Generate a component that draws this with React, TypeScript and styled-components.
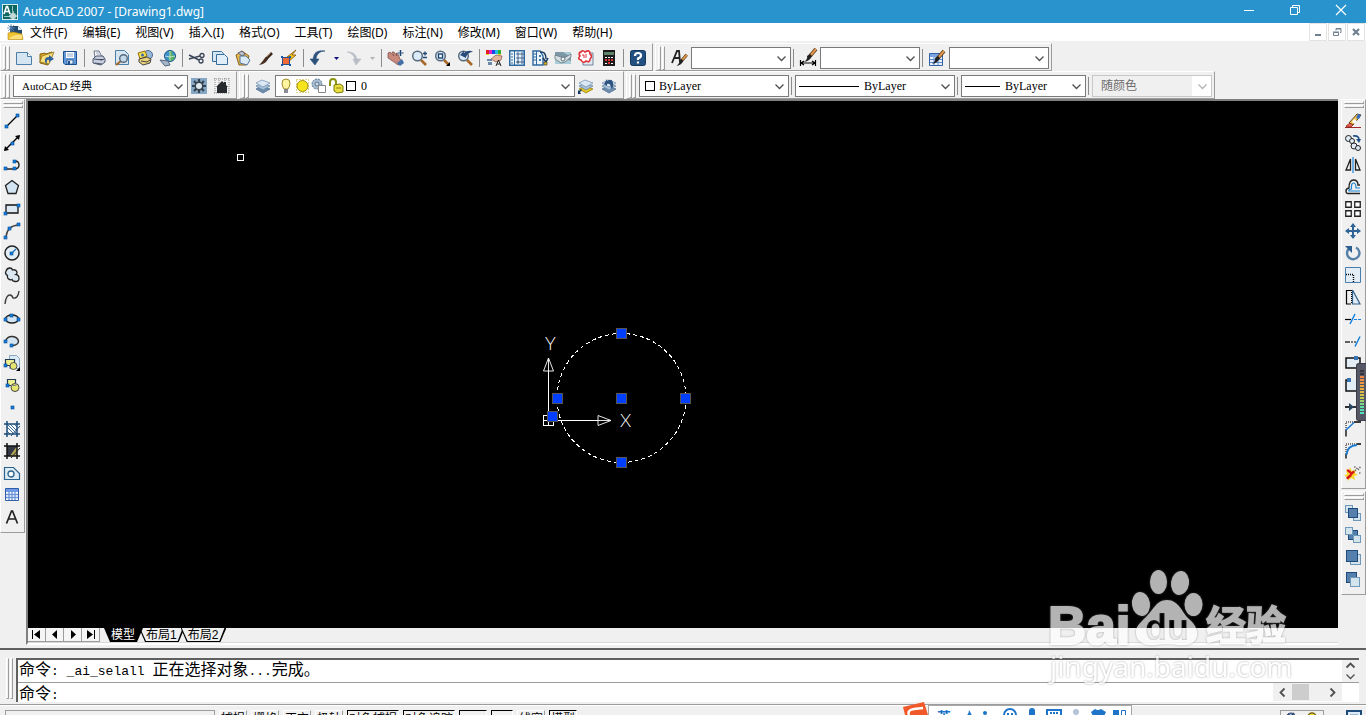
import React from "react";
import styled, { createGlobalStyle, css } from "styled-components";

const face = "#f0f0f0";
const shadow = "#9c9c9c";
const dark = "#606060";
const uiFont = '"Noto Sans", "Noto Sans CJK SC", sans-serif';
const songFont = '"Liberation Serif", "Noto Sans CJK SC", serif';

const GlobalStyle = createGlobalStyle`
  * { box-sizing: border-box; }
  body { margin: 0; background: ${face}; overflow: hidden; }
  button, input, select { font: inherit; color: inherit; margin: 0; }
`;

const Shell = styled.div`
  position: relative;
  display: flex;
  flex-direction: column;
  height: 100vh;
  overflow: hidden;
  background: ${face};
  color: #000;
  font-family: ${uiFont};
  font-size: 12px;
`;

const Glyph = styled.svg`
  display: block;
  flex: none;
  overflow: visible;
`;

/* ---------- title and menu ---------- */

const TitleBar = styled.header`
  display: flex;
  align-items: center;
  flex: none;
  height: 23px;
  padding: 0 2px;
  background: #2893cc;
  color: #fff;
`;

const Title = styled.h1`
  flex: 1;
  margin: 0 0 0 5px;
  font-size: 12px;
  font-weight: 400;
  line-height: 22px;
`;

const CaptionButton = styled.button`
  display: flex;
  align-items: center;
  align-self: flex-start;
  justify-content: center;
  width: 46px;
  height: 20px;
  padding: 0;
  border: 0;
  background: none;
`;

const MenuBar = styled.nav`
  display: flex;
  align-items: center;
  flex: none;
  height: 18px;
  padding: 0 1px 0 7px;
  background: #fff;
`;

const MenuList = styled.div`
  display: flex;
  flex: 1;
  gap: 15px;
  margin-left: 7px;
`;

const MenuItem = styled.button`
  padding: 2px 0 0;
  border: 0;
  background: none;
  line-height: 18px;
  white-space: nowrap;
`;

const ChildButton = styled.button`
  display: flex;
  align-items: center;
  justify-content: center;
  width: 18px;
  height: 18px;
  margin-left: 1px;
  padding: 0;
  border: 1px solid #e3e3e3;
  background: #fff;
`;

/* ---------- toolbars ---------- */

const ToolbarDock = styled.div`
  flex: none;
  padding-top: 2px;
`;

const ToolbarRow = styled.div`
  display: flex;
  gap: 2px;
`;

const edges = css`
  border: 1px solid;
  border-color: #fff ${shadow} ${shadow} #fff;
`;

const Bar = styled.div`
  ${edges}
  display: flex;
  align-items: center;
  flex: none;
  height: 28px;
  padding: 2px 2px 0;
`;

const Grip = styled.span<{ $vertical?: boolean; $tall?: boolean }>`
  flex: none;
  display: flex;
  flex-direction: ${(p) => (p.$vertical ? "column" : "row")};
  gap: 1px;
  ${(p) =>
    p.$vertical
      ? "width: 20px; height: 7px; margin: 1px 0 2px 2px;"
      : `width: 7px; height: ${p.$tall ? 41 : 24}px; margin-right: 3px;`}
  &::before, &::after {
    content: "";
    flex: 1;
    ${edges}
  }
`;

const ToolButton = styled.button<{ $narrow?: boolean }>`
  flex: none;
  display: flex;
  align-items: center;
  width: ${(p) => (p.$narrow ? 13 : 23)}px;
  height: 22px;
  padding: 0 0 0 ${(p) => (p.$narrow ? 4 : 3)}px;
  border: 0;
  background: none;
`;

const Separator = styled.span`
  flex: none;
  width: 1px;
  height: 18px;
  margin: 0 3px 0 2px;
  background: #8c8c8c;
`;

const Combo = styled.label<{ $width: number; $off?: boolean }>`
  flex: none;
  display: flex;
  align-items: center;
  gap: 3px;
  width: ${(p) => p.$width}px;
  height: 22px;
  padding: 0 4px 0 3px;
  border: 1px solid ${(p) => (p.$off ? "#c8c8c8" : "#7a7a7a")};
  background: ${(p) => (p.$off ? "linear-gradient(to left, #fff 19px, #f0f0f0 19px)" : "#fff")};
  color: ${(p) => (p.$off ? "#6d6d6d" : "#000")};
`;

const ComboSelect = styled.select<{ $small?: boolean; $indent?: number }>`
  appearance: none;
  flex: 1;
  min-width: 0;
  height: 18px;
  padding: 0 0 0 ${(p) => p.$indent ?? 0}px;
  border: 0;
  background: none;
  opacity: 1;
  font-family: ${songFont};
  font-size: ${(p) => (p.$small ? 11 : 12)}px;
`;

/* ---------- workspace ---------- */

const Workspace = styled.main`
  display: flex;
  flex: 1;
  min-height: 0;
`;

const SideDock = styled.aside<{ $end?: boolean }>`
  display: flex;
  flex-direction: column;
  align-items: ${(p) => (p.$end ? "flex-end" : "flex-start")};
  flex: none;
  gap: 2px;
  width: 26px;
`;

const SideBar = styled.div`
  ${edges}
  width: 25px;
  padding-bottom: 4px;
`;

const SideButton = styled.button`
  display: flex;
  align-items: center;
  width: 22px;
  height: 22px;
  padding: 0 0 0 3px;
  border: 0;
  background: none;
`;

const DrawingFrame = styled.section`
  display: flex;
  flex-direction: column;
  flex: 1;
  min-width: 0;
  margin: 0 2px 3px 0;
  border-left: 2px solid #808080;
  border-top: 2px solid #808080;
  border-bottom: 2px solid #fff;
`;

const Canvas = styled.div`
  flex: 1;
  min-height: 0;
  background: #000;
`;

const Drawing = styled.svg`
  display: block;
  width: 100%;
  height: 100%;
  font-family: Lato, "Liberation Sans", sans-serif;
  font-weight: 300;
`;

const SheetRow = styled.div`
  display: flex;
  flex: none;
  height: 15px;
  border-bottom: 1px solid #d9d9d9;
`;

const SheetNav = styled.button`
  display: flex;
  align-items: center;
  justify-content: center;
  width: 18px;
  height: 14px;
  padding: 0;
  border: 0;
  border-right: 1px solid ${shadow};
  border-bottom: 1px solid ${shadow};
  background: #f5f5f5;
`;

const SheetTab = styled.button<{ $active?: boolean }>`
  position: relative;
  height: 14px;
  margin-left: ${(p) => (p.$active ? 4 : -4)}px;
  padding: 0 8px 0 7px;
  border: 0;
  background: #000;
  clip-path: polygon(0 0, 100% 0, calc(100% - 6px) 100%, 6px 100%);
  color: ${(p) => (p.$active ? "#fff" : "#000")};
  font-family: "Liberation Sans", "Noto Sans CJK SC", sans-serif;
  line-height: 12px;
  z-index: ${(p) => (p.$active ? 1 : 0)};
  isolation: isolate;
  &::before {
    content: "";
    position: absolute;
    z-index: -1;
    inset: 0 0 1px;
    background: ${(p) => (p.$active ? "#000" : face)};
    clip-path: polygon(1px 0, calc(100% - 2px) 0, calc(100% - 7px) 100%, 7px 100%);
  }
`;

/* ---------- command window ---------- */

const CommandDock = styled.section`
  display: flex;
  flex: none;
  padding: 8px 7px 2px 6px;
  border-top: 2px solid ${dark};
  border-bottom: 1px solid ${shadow};
`;

const CommandBody = styled.div`
  flex: 1;
  min-width: 0;
  border-left: 2px solid ${dark};
  border-top: 2px solid ${dark};
  background: #fff;
  font-family: "Noto Sans CJK SC", sans-serif;
  font-size: 16px;
  line-height: 16px;
`;

const CommandLine = styled.div`
  display: flex;
  align-items: flex-start;
  height: 22px;
  padding-left: 1px;
  & + & {
    height: 20px;
    border-top: 1px solid ${shadow};
  }
`;

const History = styled.div`
  flex: 1;
  white-space: pre;
`;

const Prompt = styled.label`
  padding-top: 1px;
`;

const Code = styled.span`
  font-family: "Liberation Mono", monospace;
  font-size: 13px;
`;

const PromptInput = styled.input`
  flex: 1;
  min-width: 0;
  padding: 0;
  border: 0;
  outline: 0;
  background: none;
`;

const VerticalScroll = styled.div`
  display: flex;
  flex-direction: column;
  justify-content: space-around;
  align-items: center;
  width: 17px;
  height: 22px;
  background: ${face};
`;

const HorizontalScroll = styled.div`
  display: flex;
  align-items: stretch;
  width: 69px;
  height: 18px;
  margin-right: 17px;
  background: ${face};
`;

const ScrollButton = styled.button<{ $wide?: boolean }>`
  display: flex;
  align-items: center;
  justify-content: center;
  width: ${(p) => (p.$wide ? 19 : 17)}px;
  padding: 0;
  border: 0;
  background: none;
`;

const Thumb = styled.span`
  width: 17px;
  margin: 1px auto 1px 0;
  background: #cdcdcd;
`;

/* ---------- status bar ---------- */

const StatusBar = styled.footer`
  display: flex;
  align-items: flex-start;
  flex: none;
  gap: 4px;
  height: 10px;
  padding: 4px 4px 0 5px;
  border-top: 1px solid #fff;
  overflow: hidden;
  font-family: "Liberation Sans", "Noto Sans CJK SC", sans-serif;
`;

const Coordinates = styled.output`
  flex: none;
  width: 210px;
  height: 18px;
  border: 1px solid ${shadow};
`;

const Toggle = styled.button<{ $on?: boolean; $wide?: boolean; $slim?: boolean }>`
  flex: none;
  width: ${(p) => (p.$wide ? 52 : p.$slim ? 22 : 28)}px;
  height: 18px;
  padding: 0;
  border: 1px solid;
  border-color: ${(p) => (p.$on ? "#000 #fff #fff #000" : `#fff ${shadow} ${shadow} #fff`)};
  background: ${face};
  line-height: 15px;
  white-space: nowrap;
  overflow: hidden;
`;

const Tray = styled.div`
  display: flex;
  flex: none;
  gap: 10px;
  width: 44px;
  height: 18px;
  margin-left: auto;
  padding: 1px 4px;
  border: 1px solid ${shadow};
`;

const TrayButton = styled.button`
  flex: none;
  margin-left: 18px;
  padding: 0;
  border: 0;
  background: none;
`;

/* ---------- floating layers ---------- */

const Ime = styled.div`
  position: absolute;
  left: 903px;
  bottom: 0;
  display: flex;
  align-items: flex-end;
  height: 13px;
  overflow: hidden;
`;

const ImePanel = styled.div`
  display: flex;
  gap: 10px;
  width: 204px;
  height: 10px;
  padding: 3px 5px 0 8px;
  border: 1px solid #a8a8a8;
  border-bottom: 0;
  background: #fff;
  color: #1d74c8;
  font-weight: 700;
  font-size: 14px;
  line-height: 16px;
`;

const Watermark = styled.svg`
  position: absolute;
  right: 66px;
  bottom: 25px;
  opacity: 0.7;
  pointer-events: none;
  filter: drop-shadow(0 0 1px rgba(110, 110, 110, 0.8));
`;

const Meter = styled.div`
  position: absolute;
  right: 0;
  top: 363px;
  width: 10px;
  height: 58px;
  padding: 6px 2px 6px 3px;
  border: 1px solid #3c3d48;
  border-right: 0;
  border-radius: 3px 0 0 3px;
  background: #565765;
`;

const MeterScale = styled.div`
  height: 100%;
  background:
    repeating-linear-gradient(to bottom, transparent 0 2px, #565765 2px 3px),
    linear-gradient(to bottom, #34353c 0 12%, #f08048 12%, #e8a840 40%, #cfc848 60%, #58e0a8 85%, #50e0c0);
`;

/* ---------- icon drawings (16 x 16) ---------- */

const navy = "#1c4b7c";
const pale = "#d3e4f2";
const Dot = ({ x, y }: { x: number; y: number }) => (
  <rect x={x} y={y} width="3" height="3" fill="#1080e0" stroke="#0a4c90" strokeWidth=".6" />
);
const Layers = ({ gold }: { gold?: boolean }) => (
  <g strokeWidth=".7">
    <path d="M1 11l6-3 8 3-7 4z" fill={gold ? "#e6c820" : "#6f8fb0"} stroke={gold ? "#8a7200" : "#45658a"} />
    <path d="M1 8l6-3 8 3-7 4z" fill="#a9c2da" stroke="#5c7c9e" />
    <path d="M1 5l6-3 8 3-7 4z" fill="#dce9f4" stroke="#6d8cad" />
  </g>
);
const Lens = () => (
  <>
    <path d="M10 10l5 5" stroke="#a86828" strokeWidth="2.6" />
    <circle cx="6.5" cy="6" r="4.8" fill="#dcebf8" stroke="#596a7c" strokeWidth="1.5" />
  </>
);
const Brush = () => (
  <>
    <path d="M15 1L9 8" stroke="#603818" strokeWidth="3.6" />
    <path d="M15 1L9 8" stroke="#e09a50" strokeWidth="2" />
    <path d="M9 6l2 2q-2 5-8 6 4-3 3-6z" fill="#202020" />
  </>
);
const Squares = ({ kind }: { kind: number }) => {
  const lite = (x: number, y: number, s = 7) => (
    <rect x={x} y={y} width={s} height={s} fill="#d4e4ec" stroke="#7098b8" />
  );
  const deep = (x: number, y: number, s = 9) => (
    <rect x={x} y={y} width={s} height={s} fill="#5580ae" stroke="#1c4b7c" />
  );
  if (kind === 0) return <>{lite(0.5, 0.5)}{lite(8.5, 8.5)}{deep(3.5, 3.5)}</>;
  if (kind === 1) return <>{deep(3.5, 3.5)}{lite(0.5, 0.5)}{lite(8.5, 8.5)}</>;
  if (kind === 2) return <>{lite(5.5, 5.5, 10)}{deep(1.5, 1.5, 11)}</>;
  return <>{deep(1.5, 1.5, 10)}{lite(5.5, 6.5, 9)}</>;
};

const art: Record<string, React.ReactNode> = {
  app: <><rect x=".5" y=".5" width="15" height="15" fill="#0d6662" stroke="#d8ecec" /><path d="M2 10L4.500 2.500h1L8 10M3 7.500h4" stroke="#fff" strokeWidth="1.600" fill="none" /><path d="M10.500 2v5M2 12.500h6" stroke="#9cc8c6" /><rect x="9" y="10" width="4" height="4" fill="none" stroke="#fff" /><path d="M11 7v9M7 12h9" stroke="#fff" /></>,
  doc: <><path d="M3 2h8l4 4v5L3 13z" fill="#23496f" /><path d="M11 2v4h4z" fill="#dfe9f2" /><path d="M0 4h8M4 0v8M1 1l6 6M7 1L1 7" stroke="#5f8cb8" strokeWidth=".8" /><path d="M1 9l5-1 9 2 1 5.500H1z" fill="#f0c430" stroke="#b98a10" strokeWidth=".6" /><path d="M2 15q4-5 13-4v4z" fill="#fbe07c" /></>,
  new: <><path d="M.5 2.500h11l4 4v8H.5z" fill="#d5e6f2" stroke="#4c7ea8" /><path d="M11.500 2.500v4h4" fill="#fff" stroke="#4c7ea8" /></>,
  open: <><path d="M1 4l5-1 1 1 6-2 1 2-5 11-8-2z" fill="#d8a420" stroke="#856410" /><path d="M3 6l12-4-5 12-9-2z" fill="#f7e07a" stroke="#8a6a18" strokeWidth=".7" /><path d="M6 12Q5 7 10 7V5l5 4-5 3v-2q-3-1-2 4z" fill="#315f9a" /></>,
  save: <><path d="M1.500 1.500h13v13H3l-1.500-1.500z" fill="#5f97d8" stroke="#1d4e8e" /><path d="M4 2h8v6H4z" fill="#fff" /><path d="M5 4h6M5 6h6" stroke="#88a8cc" /><path d="M5 10h6v4H5z" fill="#e7eef6" stroke="#1d4e8e" strokeWidth=".7" /><path d="M6 11h2v3H6z" fill="#1d4e8e" /></>,
  print: <><path d="M4 7L3 1h5l3 6z" fill="#fff" stroke="#687488" /><path d="M2 9l3-3h7l2 3v3l-4 3-8-2z" fill="#c9d0de" stroke="#4b566c" /><path d="M3 9l8 1 2-1M4 13l7 1" stroke="#4b566c" /><path d="M5 3h3M6 5h3" stroke="#98a4b8" /></>,
  preview: <><path d="M1.500.5h9l4 4v10h-13z" fill="#d5e6f2" stroke="#4c7ea8" /><path d="M7 11l-5 4" stroke="#a86828" strokeWidth="2" /><circle cx="9.500" cy="8.500" r="3.800" fill="#c4d9ea" stroke="#58687c" strokeWidth="1.400" /></>,
  publish: <><circle cx="11" cy="5" r="4.500" fill="#98b8da" stroke="#486a90" /><path d="M1 3l7-2 2 5-7 3z" fill="#f4dc50" stroke="#907010" /><path d="M2 9l8-2 4 2-1 4-7 2-4-3z" fill="#e9d27c" stroke="#444" /><path d="M4 11l6 1 3-2" stroke="#444" fill="none" /><circle cx="5.500" cy="5" r="1.500" fill="#3a6cb0" /></>,
  web: <><circle cx="10" cy="6" r="5.500" fill="#3d94cc" stroke="#1e5484" /><path d="M8 1q3 2 1 5t2 5q4-1 4-5-3 0-3-5z" fill="#54b060" /><path d="M5 6q5 2 10 0M10 1v10" stroke="#fff" strokeWidth=".6" fill="none" /><path d="M0 10l8 1 2 4-5 1z" fill="#a5b6cc" stroke="#54667e" /></>,
  cut: <g fill="none" stroke="#3c4658"><path d="M0 5l10 5M0 9l11-3" strokeWidth="1.600" /><circle cx="13" cy="5.500" r="2" strokeWidth="1.300" /><circle cx="12" cy="11" r="2" strokeWidth="1.300" /></g>,
  copy: <><path d="M.5 1.500h9l2 2v8H.5z" fill="#d5e6f2" stroke="#3a6c9c" /><path d="M4.500 4.500h8l3 3v7h-11z" fill="#dfeef8" stroke="#3a6c9c" /></>,
  paste: <><path d="M1 5l6-4 7 5-3 9H4z" fill="#e6b94a" stroke="#8a6420" /><path d="M3 3l4-2 3 3-3 2z" fill="#b8c0cc" stroke="#667" /><path d="M5 6h6l4 4-3 5-7-2z" fill="#dceaf5" stroke="#53749a" /></>,
  match: <><path d="M14 3L8 9" stroke="#302018" strokeWidth="2.600" /><path d="M13 3L9 7" stroke="#9a6038" strokeWidth="1" /><path d="M8 7l2 2q-2 5-9 6 4-4 5-6z" fill="#4a3024" /></>,
  block: <><path d="M15 0L6 7h4l-4 6 9-8h-4z" fill="#f8c820" stroke="#805000" strokeWidth=".8" /><rect x="1.500" y="7.500" width="7" height="7" fill="#f06a38" stroke="#2a508a" /><path d="M0 6h2v2H0zM8 6h2v2H8zM0 14h2v2H0zM8 14h2v2H8z" fill="#1a58b0" /></>,
  undo: <path d="M15 1Q7 1 6 9h3l-4 6-5-6h3Q4-1 15 1z" fill="#2c527c" stroke="#2c527c" strokeWidth=".6" />,
  redo: <path d="M1 2q8-1 10 7h4l-5 6-3-6h2Q7 3 1 2z" fill="#b8bec4" stroke="#b8bec4" strokeWidth=".6" />,
  pan: <><path d="M0 3l2-1 4 4-2-4 2 0 3 4-1-3 2 1 2 5 2 3-4 3-4-3-6-4z" fill="#c8897c" stroke="#7a4a44" strokeWidth=".7" /><path d="M9 13l5-4 2 4-4 3z" fill="#4470a8" /><path d="M12.500 0v6M9.500 3h6M11.500 1h2M11.500 5h2" stroke="#1e4676" /></>,
  zoom: <><Lens /><path d="M12 3.500h4M14 1.500v4M12 7.500h4" stroke="#1e4676" strokeWidth="1.300" /></>,
  zoomWin: <><Lens /><rect x="4.500" y="4" width="4" height="4" fill="#fff" stroke="#1e4676" strokeWidth="1.400" /><path d="M16 12v4h-4z" /></>,
  zoomPrev: <><Lens /><path d="M3 5l4-4v2q5-4 9-1-5 0-7 5v1z" fill="#284c7a" /></>,
  props: <><path d="M0 0h3v4H0z" fill="#e02020" /><path d="M3 0h3v4H3z" fill="#e020c0" /><path d="M6 0h3v4H6z" fill="#2040f0" /><path d="M9 0h3v4H9z" fill="#20c0e0" /><path d="M12 0h3v4h-3z" fill="#30b030" /><path d="M0 4h3v1H0zM12 4h3v1h-3z" fill="#f0d020" /><path d="M5 9l5-4 6 1-1 4-5 2z" fill="#e8b49a" stroke="#7c5444" strokeWidth=".7" /><path d="M1 9h5v2H1zM2 12h4v3H2z" fill="#6c88a8" /><path d="M10 16l2.500-6 2.500 6M11 14h3" stroke="#222" fill="none" /></>,
  center: <><rect x=".75" y=".75" width="14.500" height="14.500" fill="#edf5fb" stroke="#2d68a0" strokeWidth="1.500" /><path d="M5.500 1v14" stroke="#2d68a0" /><path d="M2 4h2M2 7h2M2 10h2M2 13h2" stroke="#2d68a0" /><path d="M8 3h2v2H8zM12 3h2v2h-2zM8 7h2v2H8zM12 7h2v2h-2zM12 11h2v2h-2z" fill="#fff" stroke="#2d568a" strokeWidth=".9" /><path d="M8 11h2v2H8z" fill="#f0c020" stroke="#2d568a" /></>,
  palette: <><path d="M1 1h7l3 5v9H1z" fill="#edf5fb" stroke="#2d68a0" strokeWidth="1.400" /><path d="M4.500 1v14M1 4h3M1 7h3M1 10h3" stroke="#2d68a0" /><path d="M7 5h2v2H7zM7 9h2v2H7z" fill="#3d78b0" /><path d="M8 2q6-1 6 7M11 8l3 4 2-4" fill="none" stroke="#183860" strokeWidth="1.500" /><path d="M12 12h3v3h-3z" fill="#e8c020" stroke="#333" strokeWidth=".7" /></>,
  sheet: <><path d="M0 2h16v12H0z" fill="#a9ccd8" /><path d="M0 2h8l8 5v4L0 5z" fill="#7d99a6" /><path d="M0 5l9 3 7-4v3l-6 5-4 1-6-4z" fill="#d5dfe2" stroke="#65757c" strokeWidth=".8" /><circle cx="8" cy="9" r="2" fill="#eef4f5" stroke="#65757c" /></>,
  markup: <><path d="M5 3h10v12H5z" fill="#dfe7ee" stroke="#70849c" /><path d="M2.500 3Q4-1 7 2q5-3 5 2 3 2 0 5 0 4-4 2-3 3-5-1-4-1-1-4-2-3 .5-4z" fill="#fff" stroke="#e03038" strokeWidth="1.600" /><path d="M4 5h2v3M8 4v4" stroke="#e03038" fill="none" /></>,
  calc: <><path d="M2 0h12v16H2z" fill="#1b1b1b" /><path d="M3 2h10v3H3z" fill="#5d8468" /><path d="M4 7h2v1H4zM7 7h2v1H7zM10 7h2v1h-2z" fill="#fff" /><path d="M4 9h2v2H4zM7 9h2v2H7zM10 9h2v2h-2zM7 12h2v2H7z" fill="#e03030" /><path d="M4 13h2v1H4zM10 13h2v1h-2z" fill="#fff" /></>,
  help: <><rect x=".5" y=".5" width="15" height="15" rx="2" fill="#235080" stroke="#14375c" /><path d="M5 6q0-3 3-3t3 2.500q0 2-3 3v1.500M8 11.500v2" fill="none" stroke="#fff" strokeWidth="2.200" /></>,
  textStyle: <><path d="M1 13L6 1h2l1 11M3 8h6" fill="none" stroke="#222" strokeWidth="1.800" /><g transform="translate(3 4) scale(.85)"><Brush /></g></>,
  dimStyle: <><g transform="translate(1 -2)"><Brush /></g><path d="M.5 10v6M15.500 10v6M1 13h14M4 11l-3 2 3 2M12 11l3 2-3 2" fill="none" stroke="#000" strokeWidth="1.200" /></>,
  tableStyle: <><path d="M.5 3.500h13v12H.5z" fill="#e7f0fc" stroke="#3460a8" /><path d="M1 4h12v3H1z" fill="#7aa4e0" /><path d="M1 9.500h12M1 12.500h12M5 7v8M9 7v8" stroke="#5c88cc" /><Brush /></>,
  gear: <><path d="M0 0h16v16H0z" fill="#86a8c6" /><path d="M8 1v14M1 8h14M3 3l10 10M13 3L3 13" stroke="#36434f" strokeWidth="2.200" /><circle cx="8" cy="8" r="4.500" fill="#36434f" /><circle cx="8" cy="8" r="3" fill="#dfe8ef" /></>,
  home: <><path d="M1 0v16M5 0v16M11 0v16M15 0v16M0 1h16M0 15h16" stroke="#8a8a8a" strokeDasharray="1 1" /><path d="M2 9l6-6 2 2V4h2v3l2 2h-1v6H3V9z" fill="#26292e" /></>,
  layers: <Layers />,
  layerPick: <><Layers gold /><path d="M0 16v-4l1 1 2-2 1 1-2 2 1 2z" fill="#18365c" /></>,
  layerPrev: <><Layers /><path d="M3 6l3-5v2q7-4 6 6l-2 2q0-6-4-5v2z" fill="#2d537f" /></>,
  line: <><path d="M2 14L14 2" stroke="#000" strokeWidth="1.300" /><Dot x={1} y={12} /><Dot x={12} y={1} /></>,
  xline: <><path d="M1 15L15 1" stroke="#000" strokeWidth="1.400" /><path d="M0 16l1-5 4 4zM16 0l-5 1 4 4z" /><Dot x={7} y={7} /></>,
  pline: <><path d="M2 12h8M10 12q5 0 5-4t-4-4" fill="none" stroke="#222" strokeWidth="1.400" /><Dot x={0} y={10} /><Dot x={9} y={10} /><Dot x={9} y={3} /></>,
  polygon: <path d="M8 1.500l6.500 5-2.500 8H4L1.500 6.500z" fill={pale} stroke="#222" strokeWidth="1.300" />,
  rect: <><path d="M2 4h12v8H2z" fill="#dce8f2" stroke="#111" strokeWidth="1.300" /><Dot x={0} y={11} /><Dot x={13} y={3} /></>,
  arc: <><path d="M2 14Q3 3 14 2" fill="none" stroke="#444" strokeWidth="1.400" /><Dot x={0} y={13} /><Dot x={4} y={4} /><Dot x={13} y={0} /></>,
  circle: <><circle cx="8" cy="8" r="7" fill="#e2edf6" stroke="#222" strokeWidth="1.500" /><path d="M8 8l4-4" stroke="#1870c0" strokeWidth="1.300" /><Dot x={6} y={7} /></>,
  cloud: <path d="M2 4q1-3 4-3 2 0 2.500 2Q12 2 13 5q0 2-1 2.500 3 .5 3 4 0 3-3.500 3-3 0-3.500-2-2 1-4-1-1-1-.5-3-3-2-1.500-4.500z" fill="#dbe8f1" stroke="#222" strokeWidth="1.300" />,
  spline: <path d="M1 15q1-9 5-9 2 0 3 3 5 1 6-7" fill="none" stroke="#3c3c3c" strokeWidth="1.400" />,
  ellipse: <><ellipse cx="8" cy="8" rx="6.500" ry="4" fill={pale} stroke="#222" strokeWidth="1.400" /><Dot x={0} y={7} /><Dot x={13} y={7} /><Dot x={6} y={3} /></>,
  ellipseArc: <><path d="M1.500 8q2-5 7-4.500t6 4.500q0 4-6 4.500z" fill={pale} /><path d="M1.500 8q2-5 7-4.500t6 4.500q0 4-6 4.500" fill="none" stroke="#333" strokeWidth="1.400" /><Dot x={0} y={7} /><Dot x={6} y={11} /></>,
  insert: <><path d="M5.500.5h7l3 3v10h-10z" fill="#dceaf5" stroke="#88a8c4" /><path d="M1.500 4.500h9v6h-9z" fill="#eff090" stroke="#243a50" strokeWidth="1.200" /><circle cx="9.500" cy="11" r="3.500" fill="#e7e470" stroke="#555" /><Dot x={0} y={9} /><path d="M16 12v4h-4z" /></>,
  makeBlock: <><path d="M3.500 2.500h8v6h-8z" fill="#eff090" stroke="#243a50" strokeWidth="1.200" /><circle cx="11" cy="10.500" r="4" fill="#e7e470" stroke="#444" /><path d="M7 8.500h5V6" stroke="#888" fill="none" /><Dot x={2} y={7} /></>,
  point: <Dot x={7} y={7} />,
  hatch: <><path d="M3 3h10v10H3z" fill="#fff" /><path d="M3 10l3 3M3 6l7 7M3 3l10 10M6 3l7 7M10 3l3 3" stroke="#2d6090" strokeWidth=".9" /><path d="M3 0v16M13 0v16M0 3h16M0 13h16" stroke={navy} strokeWidth="1.500" /><path d="M7 15L16 5" stroke={navy} /></>,
  gradient: <><path d="M3 3h10v10H3z" fill="#333844" /><path d="M13 3v10H6z" fill="#b1a658" /><path d="M3 0v16M13 0v16M0 3h16M0 13h16" stroke="#111" strokeWidth="1.500" /><path d="M7 15L16 5" stroke="#222" /></>,
  region: <><path d="M.5 2.500h9l6 6v6H.5z" fill="#ddebf4" stroke="#2b638f" strokeWidth="1.200" /><circle cx="7" cy="9" r="3" fill="#fff" stroke="#2b638f" strokeWidth="1.300" /></>,
  table: <><path d="M1.500 1.500h13v12h-13z" fill="#fff" stroke="#315da8" /><path d="M2 2h12v3H2z" fill="#6c98e4" /><path d="M2 7.500h12M2 10.500h12M5 5v8M8 5v8M11 5v8" stroke="#6c94d8" strokeWidth="1.300" /></>,
  mtext: <path d="M2.500 14.500L7.500 2h1l5 12.500M4.500 10h7" fill="none" stroke="#222" strokeWidth="1.700" />,
  erase: <><path d="M0 14.500h16" stroke="#a02828" /><path d="M12 1l4 1-8 10-4-2z" fill="#f4c858" stroke="#5c4310" strokeWidth="1" /><path d="M13 1l3 1-2 4-3-1z" fill="#356cc0" /><path d="M9 6l3 2-2 3-3-2z" fill="#fff" /><path d="M5 10l3 2-2 2-4 0-1-1z" fill="#e46050" stroke="#7c2018" strokeWidth=".7" /></>,
  copyObj: <><circle cx="3.500" cy="3.500" r="3" fill="#dfeaf4" stroke="#222" /><circle cx="7" cy="6" r="2.500" fill="#dfeaf4" stroke="#222" /><circle cx="9" cy="11" r="3" fill="#dfeaf4" stroke="#222" /><circle cx="13" cy="13" r="2.500" fill="#dfeaf4" stroke="#222" /><path d="M8 1q6-1 6 4" fill="none" stroke="#1d4e85" strokeWidth="1.700" /><path d="M11 4h5l-2 4z" fill="#1d4e85" /></>,
  mirror: <><path d="M5.500 2v11H1zM10.500 2v11H15z" fill="#eef5fa" stroke="#222" strokeWidth="1.300" /><path d="M8 0v16" stroke="#1884e0" strokeWidth="1.200" /></>,
  offset: <><path d="M15 14.500H3q-2 0-2-2.500t3-3Q4 1 8.500 1T13 6h2" fill="none" stroke="#222" strokeWidth="1.400" /><path d="M15 12H4q-1-1.500 2.500-2Q6 4 8.500 4T11 9h4" fill="none" stroke="#1884d0" strokeWidth="1.200" /></>,
  array: <path d="M.75 .75h5.500v5.500H.75zM9.750 .75h5.500v5.500h-5.500zM.75 9.750h5.500v5.500H.75zM9.750 9.750h5.500v5.500h-5.500z" fill="#fff" stroke="#222" strokeWidth="1.300" />,
  move: <><path d="M8 2v12M2 8h12" stroke="#2d6396" strokeWidth="2" /><path d="M8 0l3 4H5zM8 16l3-4H5zM0 8l4-3v6zM16 8l-4-3v6z" fill="#2d6396" /></>,
  rotate: <><path d="M11 2.500a6.200 6.200 0 1 1-7 1" fill="none" stroke="#5580a8" strokeWidth="2.400" /><path d="M0 1h7v7z" fill="#2d5f90" /></>,
  scale: <><path d="M.5 .5h15v15H.5z" fill="#e2edf5" stroke="#4a7eac" /><path d="M1 7.500h7.500V15" fill="none" stroke="#000" strokeWidth="1.400" strokeDasharray="1 1" /></>,
  stretch: <><path d="M7.500 1v14H15z" fill="#deebf4" stroke="#315f88" strokeWidth="1.200" /><path d="M1 1.500h5M1 15h5M1.500 1v14" stroke="#000" strokeWidth="1.200" /><path d="M6.500 1v14" stroke="#000" strokeDasharray="1 1" /></>,
  trim: <><path d="M0 8.500h6" stroke="#000" strokeWidth="1.200" /><path d="M9 8.500h7" stroke="#1884e0" strokeWidth="1.200" strokeDasharray="3 1" /><path d="M5 13l5-10" stroke="#1884e0" strokeWidth="1.500" /></>,
  extend: <><path d="M0 9h5" stroke="#000" strokeWidth="1.200" /><path d="M6 9h5" stroke="#000" strokeWidth="1.200" strokeDasharray="2 1" /><path d="M10 13.500l5-10" stroke="#1884e0" strokeWidth="1.500" /></>,
  breakAt: <><path d="M1 3h14v10H1z" fill="#e3edf5" stroke="#111" strokeWidth="1.500" /><path d="M9 1h4v4H9z" fill="#3874b4" /></>,
  breakObj: <><path d="M5 3H1v11h14V3h-3" fill="#e3edf5" stroke="#111" strokeWidth="1.500" /><path d="M2 1h4v4H2z" fill="#3874b4" /></>,
  join: <><path d="M0 8h16" stroke="#000" strokeWidth="1.600" /><path d="M4 4l5 4-5 4zM15 4l-5 4 5 4z" fill="#27435e" /></>,
  chamfer: <><path d="M1 15.500V9M9 1h7" stroke="#000" strokeWidth="1.300" /><path d="M1 9V1h8" stroke="#000" fill="none" strokeDasharray="1 1" /><path d="M1 9L9 1.500" stroke="#1878d0" strokeWidth="1.500" /></>,
  fillet: <><path d="M1 15.500V11M12 1h4" stroke="#000" strokeWidth="1.300" /><path d="M1 11V1h11" stroke="#000" fill="none" strokeDasharray="1 1" /><path d="M1.500 12Q2 2.500 12 2" fill="none" stroke="#1878d0" strokeWidth="1.800" /></>,
  explode: <><path d="M1 4l3 2 1-4 2 4 4-2-1 4 3 2-4 1 1 4-4-2-3 3V12l-4-1 3-2z" fill="#f8d830" /><path d="M2.500 13l3-2.500M6 9l2.500-2M3 5.500l2 1.500" stroke="#d81818" strokeWidth="2.400" strokeLinecap="round" /><path d="M10 6l3-4M13 5l3-4M9 2h2M14 8h2" stroke="#777" strokeDasharray="1.500 1" strokeWidth="1.500" /></>,
  front: <Squares kind={0} />,
  back: <Squares kind={1} />,
  above: <Squares kind={2} />,
  under: <Squares kind={3} />,
};

const Icon = ({ name }: { name: string }) => (
  <Glyph width="16" height="16" viewBox="0 0 16 16" fill="none" aria-hidden="true">
    <g fill="#000">{art[name]}</g>
  </Glyph>
);

const Chevron = ({ dir = "down", off }: { dir?: "down" | "up" | "left" | "right"; off?: boolean }) => {
  const turn = { down: 0, up: 180, left: 90, right: 270 }[dir];
  return (
    <Glyph width="9" height="9" viewBox="0 0 9 9" fill="none" aria-hidden="true">
      <path d="M.5 2.500l4 4 4-4" stroke={off ? "#b4b4b4" : "#505050"} strokeWidth={dir === "down" ? 1.3 : 1.8} transform={`rotate(${turn} 4.500 4.500)`} />
    </Glyph>
  );
};

const Tools = ({ items }: { items: [string, string][] }) => (
  <>
    {items.map(([icon, label]) => (
      <ToolButton key={icon} aria-label={label}>
        <Icon name={icon} />
      </ToolButton>
    ))}
  </>
);

const SideTools = ({ items }: { items: [string, string][] }) => (
  <SideBar role="toolbar">
    <Grip $vertical />
    {items.map(([icon, label]) => (
      <SideButton key={icon} aria-label={label}>
        <Icon name={icon} />
      </SideButton>
    ))}
  </SideBar>
);

type PickerProps = {
  label: string;
  width: number;
  value?: string;
  small?: boolean;
  indent?: number;
  off?: boolean;
  children?: React.ReactNode;
};

const Picker = ({ label, width, value = "", small, indent, off, children }: PickerProps) => (
  <Combo $width={width} $off={off}>
    {children}
    <ComboSelect aria-label={label} $small={small} $indent={indent} disabled={off}>
      <option>{value}</option>
    </ComboSelect>
    <Chevron off={off} />
  </Combo>
);

const Swatch = () => (
  <Glyph width="13" height="14" viewBox="0 0 13 14" fill="none" aria-hidden="true">
    <rect x="2.500" y="2.500" width="9" height="9" stroke="#000" />
  </Glyph>
);

const Stroke = ({ length }: { length: number }) => (
  <Glyph width={length} height="1" aria-hidden="true">
    <rect width={length} height="1" fill="#000" />
  </Glyph>
);

const LayerStates = () => (
  <Glyph width="79" height="16" viewBox="0 0 79 16" fill="none" aria-hidden="true">
    <path d="M5 11Q3 8 3 5a4 4 0 0 1 8 0q0 3-2 6z" fill="#fdf5a0" stroke="#a08a28" />
    <path d="M5 12h4M5 14h4" stroke="#667" strokeWidth="1.500" />
    <path d="M17.500 1.500h12v13h-12z" stroke="#bda820" strokeDasharray="1 2" />
    <circle cx="23.500" cy="8" r="5.500" fill="#f6e41c" stroke="#a08c10" />
    <circle cx="38" cy="6" r="5" fill="#a9bdd0" stroke="#5c7894" strokeDasharray="2 1" />
    <circle cx="38" cy="6" r="2" fill="#cedbe6" stroke="#5c7894" />
    <path d="M39.500 7.500h7v7h-7z" fill="#fff" stroke="#888" />
    <path d="M51 8V4q0-3 3-3t3 3v3" stroke="#8c9410" strokeWidth="2" />
    <path d="M55 7l6-1 3 2v6l-6 1-3-2z" fill="#eade40" stroke="#77780c" />
    <path d="M57 10h5" stroke="#8c8410" />
    <rect x="67.500" y="3.500" width="9" height="9" stroke="#000" />
  </Glyph>
);

const menus = ["文件(F)", "编辑(E)", "视图(V)", "插入(I)", "格式(O)", "工具(T)", "绘图(D)", "标注(N)", "修改(M)", "窗口(W)", "帮助(H)"];

const drawTools: [string, string][] = [
  ["line", "直线"], ["xline", "构造线"], ["pline", "多段线"], ["polygon", "正多边形"], ["rect", "矩形"],
  ["arc", "圆弧"], ["circle", "圆"], ["cloud", "修订云线"], ["spline", "样条曲线"], ["ellipse", "椭圆"],
  ["ellipseArc", "椭圆弧"], ["insert", "插入块"], ["makeBlock", "创建块"], ["point", "点"], ["hatch", "图案填充"],
  ["gradient", "渐变色"], ["region", "面域"], ["table", "表格"], ["mtext", "多行文字"],
];

const modifyTools: [string, string][] = [
  ["erase", "删除"], ["copyObj", "复制"], ["mirror", "镜像"], ["offset", "偏移"], ["array", "阵列"],
  ["move", "移动"], ["rotate", "旋转"], ["scale", "缩放"], ["stretch", "拉伸"], ["trim", "修剪"],
  ["extend", "延伸"], ["breakAt", "打断于点"], ["breakObj", "打断"], ["join", "合并"], ["chamfer", "倒角"],
  ["fillet", "圆角"], ["explode", "分解"],
];

const orderTools: [string, string][] = [["front", "前置"], ["back", "后置"], ["above", "置于对象之上"], ["under", "置于对象之下"]];

const gripPoints = [[593, 232], [529, 297], [593, 297], [657, 297], [593, 361], [524, 315]];

const sheetNav: [string, string][] = [
  ["第一个", "M2 1h1v9H2zM10 1v9L4 5.500z"],
  ["上一个", "M9 1v9L4 5.500z"],
  ["下一个", "M5 1v9l5-4.500z"],
  ["最后一个", "M3 1v9l6-4.500zM10 1h1v9h-1z"],
];

export default function App() {
  return (
    <Shell>
      <GlobalStyle />
      <TitleBar>
        <Icon name="app" />
        <Title>AutoCAD 2007 - [Drawing1.dwg]</Title>
        <CaptionButton aria-label="最小化">
          <Glyph width="10" height="10"><path d="M0 5.500h10" stroke="#fff" /></Glyph>
        </CaptionButton>
        <CaptionButton aria-label="还原">
          <Glyph width="10" height="10" fill="none" stroke="#fff"><path d="M.5 2.500h7v7h-7zM2.500 2.500v-2h7v7h-2" /></Glyph>
        </CaptionButton>
        <CaptionButton aria-label="关闭">
          <Glyph width="10" height="10"><path d="M0 0l10 10M10 0L0 10" stroke="#fff" strokeWidth="1.200" /></Glyph>
        </CaptionButton>
      </TitleBar>

      <MenuBar>
        <Icon name="doc" />
        <MenuList>
          {menus.map((m) => <MenuItem key={m}>{m}</MenuItem>)}
        </MenuList>
        <ChildButton aria-label="最小化图形">
          <Glyph width="8" height="8"><path d="M1 7h6" stroke="#71808f" strokeWidth="2" /></Glyph>
        </ChildButton>
        <ChildButton aria-label="还原图形">
          <Glyph width="8" height="8" fill="none" stroke="#71808f"><path d="M.5 4.500h5v3h-5zM0 4h6M3 2.500v-2h5v4H7M3 1h5" /></Glyph>
        </ChildButton>
        <ChildButton aria-label="关闭图形">
          <Glyph width="8" height="8"><path d="M1 1l6 6M7 1L1 7" stroke="#71808f" strokeWidth="2.200" /></Glyph>
        </ChildButton>
      </MenuBar>

      <ToolbarDock>
        <ToolbarRow>
          <Bar role="toolbar" aria-label="标准">
            <Grip />
            <Tools items={[["new", "新建"], ["open", "打开"], ["save", "保存"]]} />
            <Separator />
            <Tools items={[["print", "打印"], ["preview", "打印预览"], ["publish", "发布"], ["web", "三维 DWF"]]} />
            <Separator />
            <Tools items={[["cut", "剪切"], ["copy", "复制到剪贴板"], ["paste", "粘贴"], ["match", "特性匹配"], ["block", "块编辑器"]]} />
            <Separator />
            <Tools items={[["undo", "放弃"]]} />
            <ToolButton $narrow aria-label="放弃列表"><Glyph width="5" height="3"><path d="M0 0h5L2.500 3z" fill="#10107c" /></Glyph></ToolButton>
            <Tools items={[["redo", "重做"]]} />
            <ToolButton $narrow aria-label="重做列表"><Glyph width="5" height="3"><path d="M0 0h5L2.500 3z" fill="#b4b4b4" /></Glyph></ToolButton>
            <Separator />
            <Tools items={[["pan", "实时平移"], ["zoom", "实时缩放"], ["zoomWin", "窗口缩放"], ["zoomPrev", "缩放上一个"]]} />
            <Separator />
            <Tools items={[["props", "特性"], ["center", "设计中心"], ["palette", "工具选项板"], ["sheet", "图纸集管理器"], ["markup", "标记集管理器"], ["calc", "快速计算器"]]} />
            <Separator />
            <Tools items={[["help", "帮助"]]} />
          </Bar>
          <Bar role="toolbar" aria-label="样式">
            <Grip />
            <Tools items={[["textStyle", "文字样式"]]} />
            <Picker label="文字样式控制" width={100} />
            <Separator />
            <Tools items={[["dimStyle", "标注样式"]]} />
            <Picker label="标注样式控制" width={100} />
            <Separator />
            <Tools items={[["tableStyle", "表格样式"]]} />
            <Picker label="表格样式控制" width={100} />
          </Bar>
        </ToolbarRow>
        <ToolbarRow>
          <Bar role="toolbar" aria-label="工作空间">
            <Grip />
            <Picker label="工作空间" width={175} value="AutoCAD 经典" small indent={5} />
            <Tools items={[["gear", "工作空间设置"], ["home", "我的工作空间"]]} />
          </Bar>
          <Bar role="toolbar" aria-label="图层">
            <Grip />
            <Tools items={[["layers", "图层特性管理器"]]} />
            <Picker label="图层控制" width={300} value="0"><LayerStates /></Picker>
            <Tools items={[["layerPick", "将对象的图层置为当前"], ["layerPrev", "上一个图层"]]} />
          </Bar>
          <Bar role="toolbar" aria-label="对象特性">
            <Grip />
            <Picker label="颜色控制" width={150} value="ByLayer"><Swatch /></Picker>
            <Separator />
            <Picker label="线型控制" width={160} value="ByLayer" indent={2}><Stroke length={60} /></Picker>
            <Separator />
            <Picker label="线宽控制" width={125} value="ByLayer" indent={2}><Stroke length={35} /></Picker>
            <Separator />
            <Picker label="打印样式控制" width={120} value="随颜色" indent={5} off />
          </Bar>
        </ToolbarRow>
      </ToolbarDock>

      <Workspace>
        <SideDock>
          <SideTools items={drawTools} />
        </SideDock>
        <DrawingFrame>
          <Canvas>
            <Drawing fill="none" stroke="#fff" shapeRendering="crispEdges">
              <rect x="209.500" y="53.500" width="6" height="6" />
              <circle cx="593.500" cy="297" r="64.500" strokeDasharray="4 3" />
              <path d="M520.500 319V270M520.500 319.500H570M515.500 314.500h10v10h-10zM520.500 314v11M515 319.500h11" />
              <path d="M520.500 257l-5 13h10zM520.500 258v12M583 319.500l-13-5v10zM570 319.500h13" shapeRendering="auto" strokeWidth=".9" />
              <g fill="#fff" stroke="none" fontSize="18">
                <text x="517" y="249">Y</text>
                <text x="592" y="326">X</text>
              </g>
              {gripPoints.map(([x, y]) => (
                <rect key={`${x}-${y}`} x={x - 4.5} y={y - 4.5} width="10" height="10" fill="#003fff" stroke="#555" />
              ))}
            </Drawing>
          </Canvas>
          <SheetRow>
            {sheetNav.map(([label, d]) => (
              <SheetNav key={label} aria-label={label}>
                <Glyph width="14" height="11"><path d={d} /></Glyph>
              </SheetNav>
            ))}
            <SheetTab $active>模型</SheetTab>
            <SheetTab>布局1</SheetTab>
            <SheetTab>布局2</SheetTab>
          </SheetRow>
        </DrawingFrame>
        <SideDock $end>
          <SideTools items={modifyTools} />
          <SideTools items={orderTools} />
        </SideDock>
      </Workspace>

      <CommandDock>
        <Grip $tall />
        <CommandBody>
          <CommandLine>
            <History>命令<Code>: _ai_selall </Code>正在选择对象<Code>...</Code>完成。</History>
            <VerticalScroll>
              <ScrollButton aria-label="向上滚动"><Chevron dir="up" /></ScrollButton>
              <ScrollButton aria-label="向下滚动"><Chevron /></ScrollButton>
            </VerticalScroll>
          </CommandLine>
          <CommandLine>
            <Prompt htmlFor="prompt">命令<Code>:</Code></Prompt>
            <PromptInput id="prompt" />
            <HorizontalScroll>
              <ScrollButton $wide aria-label="向左滚动"><Chevron dir="left" /></ScrollButton>
              <Thumb />
              <ScrollButton $wide aria-label="向右滚动"><Chevron dir="right" /></ScrollButton>
            </HorizontalScroll>
          </CommandLine>
        </CommandBody>
      </CommandDock>

      <StatusBar>
        <Coordinates />
        <Toggle>捕捉</Toggle>
        <Toggle>栅格</Toggle>
        <Toggle>正交</Toggle>
        <Toggle>极轴</Toggle>
        <Toggle $on $wide>对象捕捉</Toggle>
        <Toggle $on $wide>对象追踪</Toggle>
        <Toggle $on aria-label="DUCS" />
        <Toggle $on $slim aria-label="DYN" />
        <Toggle>线宽</Toggle>
        <Toggle $on>模型</Toggle>
        <Tray>
          <Glyph width="12" height="12"><circle cx="6" cy="6" r="5" fill="#8ea6c8" stroke="#28406c" /><path d="M3 2l6 6M9 1L4 7" stroke="#28406c" strokeWidth="1.500" /></Glyph>
          <Glyph width="10" height="12"><circle cx="5" cy="5" r="4" fill="#f0dc40" stroke="#786408" strokeWidth="1.500" /></Glyph>
        </Tray>
        <TrayButton aria-label="全屏显示">
          <Glyph width="16" height="14"><rect x="1" y="1" width="14" height="12" fill="#dceaf6" stroke="#1c4b7c" strokeWidth="2" /><path d="M4 5h8" stroke="#5c88b0" /></Glyph>
        </TrayButton>
      </StatusBar>

      <Ime>
        <Glyph width="25" height="13" viewBox="0 0 25 13">
          <path d="M0 5L21 0l4 13H2z" fill="#f2592a" />
          <path d="M6 13q-2-5 5-6l9-1" fill="none" stroke="#fff" strokeWidth="2.500" />
        </Glyph>
        <ImePanel>
          <span>英</span>
          <Glyph width="158" height="14" fill="#1d74c8">
            <path d="M8 1q0 4-3 6 4 2 6 0-1-3-3-6z" />
            <circle cx="24" cy="4" r="2" />
            <circle cx="49" cy="6" r="6" fill="none" stroke="#1d74c8" strokeWidth="2" />
            <path d="M46 4h2v2h-2zM50 4h2v2h-2z" />
            <rect x="68" y="-1" width="6" height="9" rx="3" />
            <path d="M86 1h14v8H86z" fill="none" stroke="#1d74c8" strokeWidth="2" />
            <path d="M89 3h2v2h-2zM92 3h2v2h-2zM95 3h2v2h-2z" />
            <circle cx="115" cy="3" r="3" fill="#b5c2d8" />
            <path d="M130 3l4-3q3 2 6 0l5 3-2 4h-11z" />
            <path d="M152 1h6v6h-6z" /><path d="M160.500 1.500h4v5h-4z" fill="none" stroke="#1d74c8" />
          </Glyph>
        </ImePanel>
      </Ime>

      <Meter><MeterScale /></Meter>

      <Watermark width="260" height="125" viewBox="0 0 260 125" fill="#fff">
        <defs>
          <mask id="pad">
            <path d="M127 35c12 0 15 13 22 19 7 6 9 12 8 17-2 9-11 10-19 9q-11-2-22 0c-8 1-19-1-20-11-1-7 4-11 9-16 8-7 11-18 22-18z" fill="#fff" />
            <text x="105" y="75" fontFamily="Liberation Sans, sans-serif" fontWeight="700" fontSize="36" fill="#000">du</text>
          </mask>
        </defs>
        <text x="8" y="79" fontFamily="Liberation Sans, sans-serif" fontWeight="700" fontSize="53" stroke="#fff" strokeWidth="2">Bai</text>
        <ellipse cx="101" cy="39" rx="9" ry="12" transform="rotate(-8 101 39)" />
        <ellipse cx="118.500" cy="17" rx="8.500" ry="12" />
        <ellipse cx="140" cy="18" rx="9" ry="12" transform="rotate(8 140 18)" />
        <ellipse cx="153.500" cy="39.500" rx="9" ry="11.500" />
        <path d="M90 30h80v55H90z" mask="url(#pad)" />
        <text x="166" y="75" fontFamily="Noto Sans CJK SC, sans-serif" fontWeight="700" fontSize="40" stroke="#fff" strokeWidth="1.500">经验</text>
        <text x="10" y="112" fontFamily="Noto Sans, sans-serif" fontSize="28">jingyan.baidu.com</text>
      </Watermark>
    </Shell>
  );
}
